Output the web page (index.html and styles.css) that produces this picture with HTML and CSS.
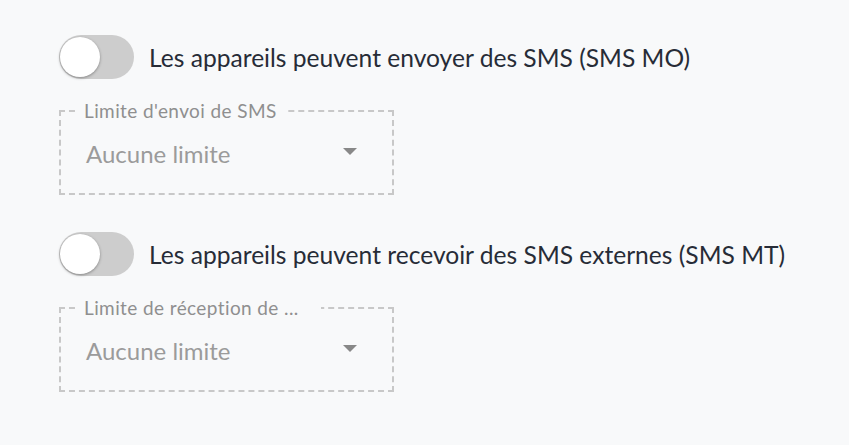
FILE: index.html
```html
<!DOCTYPE html>
<html lang="fr">
<head>
    <meta charset="UTF-8">
    <meta name="viewport" content="width=device-width, initial-scale=1.0">
    <title>SMS</title>
    <link rel="stylesheet" href="styles.css">
</head>
<body>
   <div class="settings">
      <div class="setting">
         <label class="switch-row">
            <span class="switch"><span class="thumb"></span></span>
            <span class="switch-label">Les appareils peuvent envoyer des SMS (SMS MO)</span>
         </label>
         <fieldset class="select-box">
            <legend>Limite d'envoi de SMS</legend>
            <div class="select-value">
               <span>Aucune limite</span>
               <span class="arrow"></span>
            </div>
         </fieldset>
      </div>
      <div class="setting">
         <label class="switch-row">
            <span class="switch"><span class="thumb"></span></span>
            <span class="switch-label">Les appareils peuvent recevoir des SMS externes (SMS MT)</span>
         </label>
         <fieldset class="select-box">
            <legend class="truncated">Limite de réception de ...</legend>
            <div class="select-value">
               <span>Aucune limite</span>
               <span class="arrow"></span>
            </div>
         </fieldset>
      </div>
   </div>
</body>
</html>
```

FILE: styles.css
```css
body {
    font-family: 'Lato', sans-serif;
    background-color: #f8f9fa;
    margin: 0;
    padding: 0;
    color: #272c37;
}

.settings {
    padding: 35px 0 0 59px;
    display: flex;
    flex-direction: column;
    gap: 37px;
}

.setting {
    display: flex;
    flex-direction: column;
    gap: 20px;
}

.switch-row {
    display: flex;
    align-items: center;
    gap: 15px;
    height: 44px;
}

.switch {
    position: relative;
    width: 75px;
    height: 44px;
    border-radius: 22px;
    background-color: #cdcdcd;
    flex-shrink: 0;
}

.thumb {
    position: absolute;
    left: 1px;
    top: 2px;
    width: 40px;
    height: 40px;
    border-radius: 50%;
    background-color: #fff;
    box-shadow: 0 1px 3px rgba(0, 0, 0, 0.35);
}

.switch-label {
    font-size: 24.6px;
}

.select-box {
    width: 335px;
    box-sizing: border-box;
    margin: 0;
    padding: 0 35px 9px 25px;
    border: 2px dashed #c8c8c8;
}

.select-box legend {
    margin-left: -11px;
    padding: 0 8px 0 9px;
    font-size: 19px;
    line-height: 23px;
    letter-spacing: 0.4px;
    color: #8f8f8f;
}

.select-box legend.truncated {
    padding-right: 22px;
}

.select-value {
    display: flex;
    align-items: center;
    justify-content: space-between;
    height: 62px;
    font-size: 24px;
    color: #9b9b9b;
}

.arrow {
    width: 0;
    height: 0;
    border-left: 7px solid transparent;
    border-right: 7px solid transparent;
    border-top: 7px solid #888;
    margin-top: -3px;
}
```
